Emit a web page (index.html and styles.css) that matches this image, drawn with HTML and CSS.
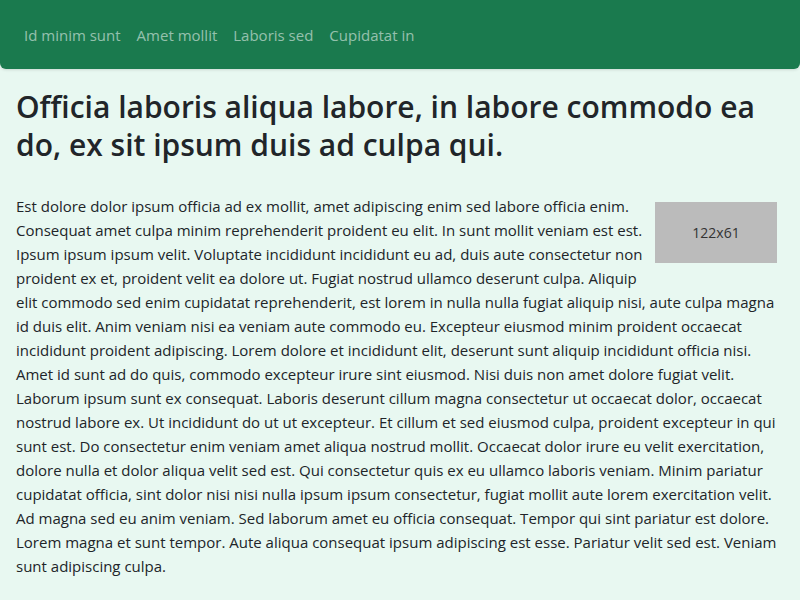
FILE: index.html
```html
<!DOCTYPE html>
<html lang="en">
<head>
<meta charset="utf-8">
<title>Page</title>
<link rel="stylesheet" href="styles.css">
</head>
<body>
<nav class="navbar">
  <a class="nav-link" href="#">Id minim sunt</a>
  <a class="nav-link" href="#">Amet mollit</a>
  <a class="nav-link" href="#">Laboris sed</a>
  <a class="nav-link" href="#">Cupidatat in</a>
</nav>
<main class="content">
  <h1 class="title">Officia laboris aliqua labore, in labore commodo ea do, ex sit ipsum duis ad culpa qui.</h1>
  <div class="placeholder">122x61</div>
  <p class="body-text">Est dolore dolor ipsum officia ad ex mollit, amet adipiscing enim sed labore officia enim. Consequat amet culpa minim reprehenderit proident eu elit. In sunt mollit veniam est est. Ipsum ipsum ipsum velit. Voluptate incididunt incididunt eu ad, duis aute consectetur non proident ex et, proident velit ea dolore ut. Fugiat nostrud ullamco deserunt culpa. Aliquip elit commodo sed enim cupidatat reprehenderit, est lorem in nulla nulla fugiat aliquip nisi, aute culpa magna id duis elit. Anim veniam nisi ea veniam aute commodo eu. Excepteur eiusmod minim proident occaecat incididunt proident adipiscing. Lorem dolore et incididunt elit, deserunt sunt aliquip incididunt officia nisi. Amet id sunt ad do quis, commodo excepteur irure sint eiusmod. Nisi duis non amet dolore fugiat velit. Laborum ipsum sunt ex consequat. Laboris deserunt cillum magna consectetur ut occaecat dolor, occaecat nostrud labore ex. Ut incididunt do ut ut excepteur. Et cillum et sed eiusmod culpa, proident excepteur in qui sunt est. Do consectetur enim veniam amet aliqua nostrud mollit. Occaecat dolor irure eu velit exercitation, dolore nulla et dolor aliqua velit sed est. Qui consectetur quis ex eu ullamco laboris veniam. Minim pariatur cupidatat officia, sint dolor nisi nisi nulla ipsum ipsum consectetur, fugiat mollit aute lorem exercitation velit. Ad magna sed eu anim veniam. Sed laborum amet eu officia consequat. Tempor qui sint pariatur est dolore. Lorem magna et sunt tempor. Aute aliqua consequat ipsum adipiscing est esse. Pariatur velit sed est. Veniam sunt adipiscing culpa.</p>
</main>
</body>
</html>
```
FILE: styles.css
```css
html, body {
  margin: 0;
  padding: 0;
}
body {
  background: #e8f8f1;
  color: #212529;
  font-family: "Open Sans", "Noto Sans", sans-serif;
  font-size: 15px;
  line-height: 24px;
}
.navbar {
  display: flex;
  align-items: center;
  height: 69px;
  padding: 0 16px;
  background: #1a7a4e;
  border-radius: 0 0 6px 6px;
  box-shadow: 0 1px 3px rgba(0,0,0,0.12);
}
.nav-link {
  padding: 8px;
  color: rgba(255,255,255,0.55);
  text-decoration: none;
  font-size: 15px;
}
.content {
  padding: 0 16px;
}
.title {
  margin: 19px 0 30px;
  font-size: 30px;
  line-height: 38px;
  font-weight: 600;
}
.body-text {
  margin: 0;
}
.placeholder {
  float: right;
  width: 122px;
  height: 61px;
  margin: 8px 7px 8px 10px;
  background: #bbbbbb;
  color: #333;
  font-size: 14px;
  display: flex;
  align-items: center;
  justify-content: center;
}
```
